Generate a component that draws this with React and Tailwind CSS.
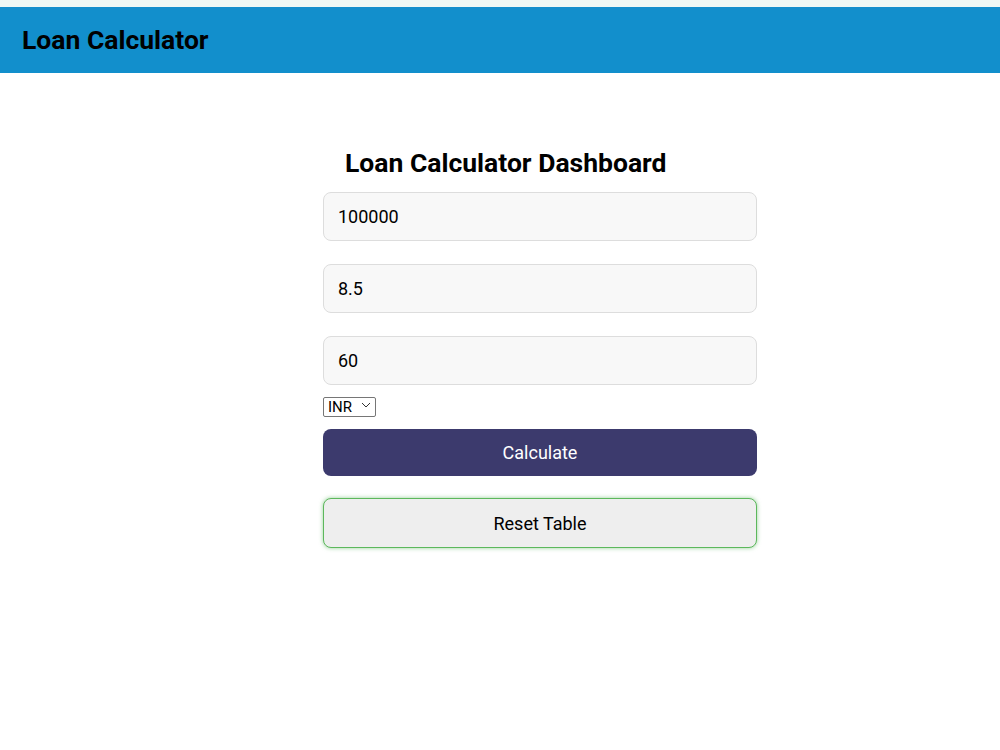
import React, { useState } from 'react';

const App = () => {
  const [amount, setAmount] = useState('100000');
  const [rate, setRate] = useState('8.5');
  const [months, setMonths] = useState('60');
  const [currency, setCurrency] = useState('INR');

  return (
    <div className="min-h-screen bg-white font-['Roboto',sans-serif]">
      <div className="h-[7px] bg-[#eef8f5]" />
      <header className="h-[66px] bg-[#128fcc] flex items-center px-[22px]">
        <h1 className="text-[26.5px] leading-[32px] font-bold text-black">Loan Calculator</h1>
      </header>

      <div className="ml-[323px] w-[434px] pt-[74px]">
        <h2 className="pl-[22px] text-[26.5px] leading-[32px] font-bold text-black mb-[13px]">
          Loan Calculator Dashboard
        </h2>

        <div className="flex flex-col gap-[23px]">
          <input
            value={amount}
            onChange={(e) => setAmount(e.target.value)}
            className="h-[49px] w-full rounded-lg border border-[#dddddd] bg-[#f8f8f8] px-[14px] text-[18px] text-black outline-none"
          />
          <input
            value={rate}
            onChange={(e) => setRate(e.target.value)}
            className="h-[49px] w-full rounded-lg border border-[#dddddd] bg-[#f8f8f8] px-[14px] text-[18px] text-black outline-none"
          />
          <input
            value={months}
            onChange={(e) => setMonths(e.target.value)}
            className="h-[49px] w-full rounded-lg border border-[#dddddd] bg-[#f8f8f8] px-[14px] text-[18px] text-black outline-none"
          />
        </div>

        {/* Currency */}
        <div className="mt-[10px] relative w-[53px] h-[20px]">
          <select
            value={currency}
            onChange={(e) => setCurrency(e.target.value)}
            className="appearance-none w-[53px] h-[20px] rounded-[2px] border border-[#767676] bg-white pl-[4px] text-[15px] leading-[18px] text-black"
          >
            <option>INR</option>
            <option>USD</option>
            <option>EUR</option>
          </select>
          <svg
            className="pointer-events-none absolute right-[5px] top-[7px]"
            width="10"
            height="6"
            viewBox="0 0 10 6"
            fill="none"
            stroke="#333"
            strokeWidth="1"
          >
            <path d="M1 1l4 4 4-4" />
          </svg>
        </div>

        <button className="mt-[14px] h-[47px] w-full rounded-lg bg-[#3c3a6d] text-[18px] text-white">
          Calculate
        </button>

        <button className="mt-[22px] h-[50px] w-full rounded-lg border border-[#5cb85c] bg-[#eeeeee] text-[18px] text-black shadow-[0_0_4px_rgba(76,175,80,0.6)]">
          Reset Table
        </button>
      </div>
    </div>
  );
};

export default App;
